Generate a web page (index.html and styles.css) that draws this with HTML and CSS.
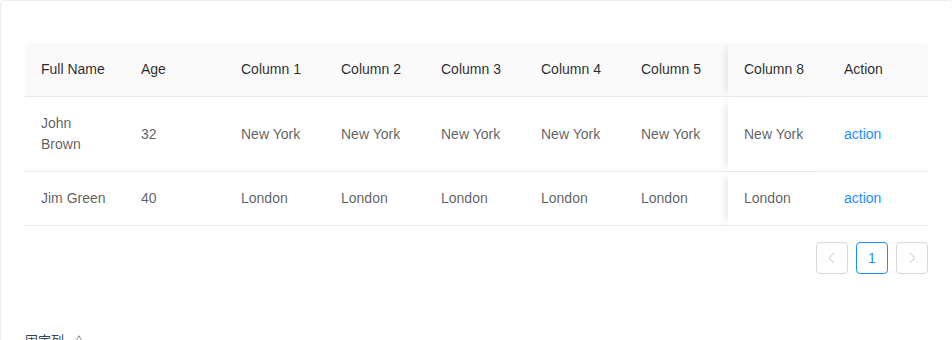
FILE: index.html
```html
<!DOCTYPE html>
<html>
<head>
<meta charset="utf-8">
<link rel="stylesheet" href="styles.css">
</head>
<body>
<section class="code-box">
  <div class="demo">
    <div class="table-wrap">
      <table class="table">
        <colgroup>
          <col class="c100"><col class="c100"><col class="c100"><col class="c100"><col class="c100"><col class="c100"><col class="c103"><col class="c100"><col class="c100">
        </colgroup>
        <thead>
          <tr>
            <th class="first">Full Name</th>
            <th>Age</th>
            <th>Column 1</th>
            <th>Column 2</th>
            <th>Column 3</th>
            <th>Column 4</th>
            <th class="clip">Column 5</th>
            <th class="fixed">Column 8</th>
            <th class="last">Action</th>
          </tr>
        </thead>
        <tbody>
          <tr>
            <td>John<br>Brown</td>
            <td>32</td>
            <td>New York</td>
            <td>New York</td>
            <td>New York</td>
            <td>New York</td>
            <td class="clip">New York</td>
            <td class="fixed">New York</td>
            <td><a class="link">action</a></td>
          </tr>
          <tr>
            <td>Jim Green</td>
            <td>40</td>
            <td>London</td>
            <td>London</td>
            <td>London</td>
            <td>London</td>
            <td class="clip">London</td>
            <td class="fixed">London</td>
            <td><a class="link">action</a></td>
          </tr>
        </tbody>
      </table>
    </div>
    <ul class="pagination">
      <li class="page-btn disabled">
        <svg width="12" height="12" viewBox="0 0 12 12"><path d="M8.2 1 L3.4 6 L8.2 11" fill="none" stroke="currentColor" stroke-width="1"/></svg>
      </li>
      <li class="page-btn active">1</li>
      <li class="page-btn disabled">
        <svg width="12" height="12" viewBox="0 0 12 12"><path d="M3.8 1 L8.6 6 L3.8 11" fill="none" stroke="currentColor" stroke-width="1"/></svg>
      </li>
    </ul>
  </div>
  <div class="meta">
    <div class="meta-title">固定列
      <svg class="edit" width="12" height="12" viewBox="0 0 12 12"><path d="M6 0.8 L10.5 8.5 L1.5 8.5 Z" fill="none" stroke="currentColor" stroke-width="1"/></svg>
    </div>
  </div>
</section>
</body>
</html>
```
FILE: styles.css
```css
html, body {
  margin: 0;
  padding: 0;
  background: #fff;
  overflow: hidden;
}
body {
  font-family: "Liberation Sans", Arial, "Noto Sans CJK SC", sans-serif;
  font-size: 14px;
  line-height: 1.5;
  color: rgba(0, 0, 0, 0.65);
}
.code-box {
  box-sizing: border-box;
  width: 953px;
  border: 1px solid #ebedf0;
  border-radius: 4px;
  position: relative;
}
.demo {
  padding: 42px 24px 50px;
}
.table-wrap {
  overflow: hidden;
}
.table {
  width: 903px;
  table-layout: fixed;
  border-collapse: separate;
  border-spacing: 0;
}
.c100 { width: 100px; }
.c103 { width: 103px; }
.table th,
.table td {
  padding: 16px;
  text-align: left;
  vertical-align: middle;
  border-bottom: 1px solid #e8e8e8;
  white-space: nowrap;
  font-weight: 400;
}
.table th {
  background: #fafafa;
  color: rgba(0, 0, 0, 0.85);
}
.table th.first { border-top-left-radius: 4px; }
.table th.last { border-top-right-radius: 4px; }
.table td { background: #fff; }
.table .clip { overflow: hidden; }
.table .fixed {
  box-shadow: -7px 0 8px -5px rgba(0, 0, 0, 0.1);
  position: relative;
}
.link {
  color: #1890ff;
  text-decoration: none;
}
.pagination {
  list-style: none;
  margin: 16px 0;
  padding: 0;
  display: flex;
  justify-content: flex-end;
  gap: 8px;
}
.page-btn {
  box-sizing: border-box;
  width: 32px;
  height: 32px;
  border: 1px solid #d9d9d9;
  border-radius: 4px;
  display: flex;
  align-items: center;
  justify-content: center;
  font-size: 14px;
  line-height: 30px;
  color: rgba(0, 0, 0, 0.65);
}
.page-btn.disabled {
  color: rgba(0, 0, 0, 0.25);
}
.page-btn.active {
  border-color: #1890ff;
  color: #1890ff;
}
.meta {
  position: relative;
  border-top: 1px solid #ebedf0;
  height: 40px;
}
.meta-title {
  position: absolute;
  top: -12px;
  left: 16px;
  padding: 1px 8px;
  background: #fff;
  color: #314659;
  font-family: "Noto Sans CJK SC", "Liberation Sans", sans-serif;
  font-size: 13px;
  line-height: 1.5;
  display: flex;
  align-items: flex-start;
  gap: 9px;
}
.edit {
  color: rgba(0, 0, 0, 0.45);
  margin-top: 5px;
}
```
